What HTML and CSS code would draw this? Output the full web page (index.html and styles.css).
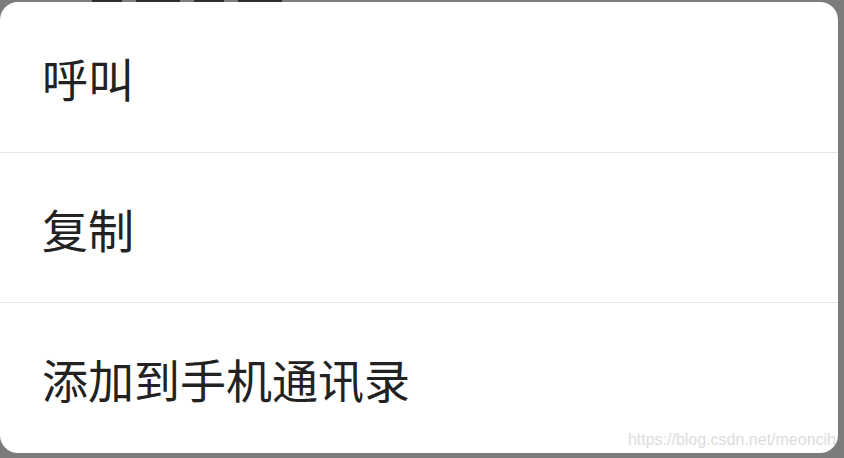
FILE: index.html
```html
<!DOCTYPE html>
<html lang="zh-CN">
<head>
  <meta charset="UTF-8">
  <meta name="viewport" content="width=device-width, initial-scale=1.0">
  <title>操作菜单</title>
  <link rel="stylesheet" href="styles.css">
</head>
<body>

  <!-- bottom strokes of the page underneath, peeking above the sheet -->
  <div class="backdrop-strokes">
    <span class="stroke"></span>
    <span class="stroke wide"></span>
    <span class="stroke"></span>
    <span class="stroke wide"></span>
  </div>

  <div class="sheet">
    <div class="sheet-item">呼叫</div>
    <div class="sheet-item">复制</div>
    <div class="sheet-item">添加到手机通讯录</div>
  </div>

  <div class="watermark">https://blog.csdn.net/meoncih</div>

</body>
</html>
```

FILE: styles.css
```css
body {
  margin: 0;
  padding: 2px 6px 5px 0;
  width: 844px;
  height: 458px;
  box-sizing: border-box;
  background-color: #7c7c7c;
  font-family: "Noto Sans CJK SC", "Noto Sans", sans-serif;
  overflow: hidden;
  position: relative;
}

.backdrop-strokes {
  position: absolute;
  top: 0;
  left: 92px;
  display: flex;
  gap: 14px;
}

.stroke {
  width: 30px;
  height: 2px;
  background: #2e2e2e;
}

.stroke.wide {
  width: 44px;
}

.sheet {
  position: relative;
  display: flex;
  flex-direction: column;
  height: 100%;
  background: #fff;
  border-radius: 18px;
  overflow: hidden;
}

.sheet-item {
  flex: 1;
  display: flex;
  align-items: center;
  padding-left: 42px;
  font-size: 46px;
  color: #222;
  border-bottom: 1px solid #e6e6e6;
}

.sheet-item:last-child {
  border-bottom: none;
}

.watermark {
  position: absolute;
  right: 8px;
  bottom: 9px;
  font-family: "Liberation Sans", Arial, sans-serif;
  font-size: 16px;
  color: #dcdcdc;
}
```
